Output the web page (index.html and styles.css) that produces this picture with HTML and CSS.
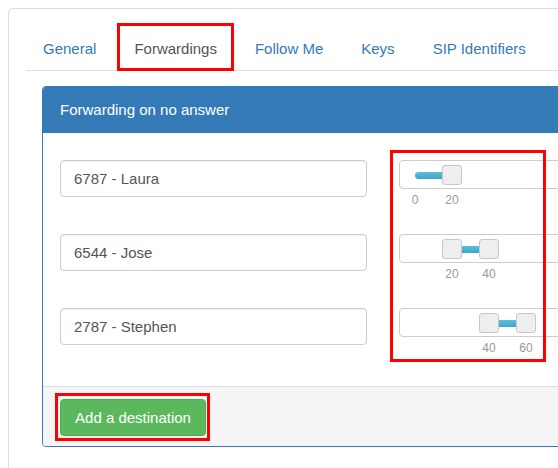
FILE: index.html
```html
<!DOCTYPE html>
<html>
<head>
<meta charset="utf-8">
<link rel="stylesheet" href="styles.css">
</head>
<body>
<div class="card">
  <ul class="tabs">
    <li class="tab"><a>General</a></li>
    <li class="tab active marked"><a>Forwardings</a></li>
    <li class="tab"><a>Follow Me</a></li>
    <li class="tab"><a>Keys</a></li>
    <li class="tab"><a>SIP Identifiers</a></li>
  </ul>
  <div class="tab-content">
    <div class="panel">
      <div class="panel-heading">Forwarding on no answer</div>
      <div class="panel-body">
        <div class="row">
          <div class="input">6787 - Laura</div>
          <div class="slider-group">
            <div class="slider">
              <div class="bar" style="left:15px;width:37px"></div>
              <div class="thumb" style="left:42px"></div>
            </div>
            <div class="labels">
              <span style="left:16px">0</span>
              <span style="left:53px">20</span>
            </div>
          </div>
        </div>
        <div class="row">
          <div class="input">6544 - Jose</div>
          <div class="slider-group">
            <div class="slider">
              <div class="bar" style="left:52px;width:37px"></div>
              <div class="thumb" style="left:42px"></div>
              <div class="thumb" style="left:79px"></div>
            </div>
            <div class="labels">
              <span style="left:53px">20</span>
              <span style="left:90px">40</span>
            </div>
          </div>
        </div>
        <div class="row">
          <div class="input">2787 - Stephen</div>
          <div class="slider-group">
            <div class="slider">
              <div class="bar" style="left:89px;width:37px"></div>
              <div class="thumb" style="left:79px"></div>
              <div class="thumb" style="left:116px"></div>
            </div>
            <div class="labels">
              <span style="left:90px">40</span>
              <span style="left:127px">60</span>
            </div>
          </div>
        </div>
        <div class="mark-sliders"></div>
      </div>
      <div class="panel-footer">
        <span class="mark-button"><button class="btn-success">Add a destination</button></span>
      </div>
    </div>
  </div>
</div>
</body>
</html>
```
FILE: styles.css
```css
html, body {
  margin: 0;
  padding: 0;
  overflow: hidden;
  background: #fff;
  font-family: "Liberation Sans", Arial, sans-serif;
  font-size: 15px;
  color: #333;
}

.card {
  margin: 8px 0 0 8px;
  width: 620px;
  min-height: 520px;
  border: 1px solid #ddd;
  border-radius: 5px;
  box-sizing: border-box;
}

.tabs {
  list-style: none;
  margin: 14px 0 0 17px;
  padding: 0;
  display: flex;
  border-bottom: 1px solid #ddd;
}

.tab {
  padding: 16px 17px 12px;
  line-height: 20px;
  margin-right: 4px;
  margin-bottom: -1px;
  color: #337ab7;
}

.tab.active {
  color: #555;
}

.tab.marked {
  outline: 3px solid #f00;
  outline-offset: -3px;
}

.tab-content {
  padding: 15px 0 0 33px;
}

.panel {
  width: 600px;
  border: 1px solid #337ab7;
  border-radius: 4px;
}

.panel-heading {
  background: #337ab7;
  color: #fff;
  padding: 13px 17px;
  line-height: 20px;
  border-radius: 3px 3px 0 0;
}

.panel-body {
  position: relative;
  padding: 27px 0 4px 17px;
}

.row {
  display: flex;
  align-items: flex-start;
  height: 74px;
}

.input {
  width: 307px;
  height: 37px;
  box-sizing: border-box;
  border: 1px solid #ccc;
  border-radius: 4px;
  padding: 0 13px;
  line-height: 35px;
  color: #555;
  box-shadow: inset 0 1px 1px rgba(0,0,0,0.06);
}

.slider-group {
  margin-left: 32px;
  width: 220px;
}

.slider {
  position: relative;
  height: 29px;
  box-sizing: border-box;
  border: 1px solid #ccc;
  border-radius: 4px;
}

.bar {
  position: absolute;
  top: 11px;
  height: 7px;
  border-radius: 4px 0 0 4px;
  background: linear-gradient(#5bbfdc, #3ea6c8);
}

.thumb {
  position: absolute;
  top: 4px;
  width: 20px;
  height: 20px;
  box-sizing: border-box;
  background: #eee;
  border: 1px solid #c8c8c8;
  border-radius: 3px;
}

.labels {
  position: relative;
  height: 14px;
  margin-top: 4px;
  font-size: 12px;
  line-height: 14px;
  color: #999;
}

.labels span {
  position: absolute;
  top: 0;
  transform: translateX(-50%);
}

.mark-sliders {
  position: absolute;
  left: 347px;
  top: 17px;
  width: 156px;
  height: 212px;
  box-sizing: border-box;
  border: 3px solid #f00;
}

.panel-footer {
  background: #f5f5f5;
  border-top: 1px solid #ddd;
  padding: 6px 17px 5px 12px;
  border-radius: 0 0 3px 3px;
}

.mark-button {
  display: inline-block;
  vertical-align: top;
  border: 3px solid #f00;
  padding: 3px 1px 2px 2px;
}

.btn-success {
  display: block;
  width: 146px;
  height: 37px;
  padding: 0;
  font-family: "Liberation Sans", Arial, sans-serif;
  font-size: 15px;
  color: #fff;
  background: #5cb85c;
  border: 1px solid #4cae4c;
  border-radius: 4px;
}
```
